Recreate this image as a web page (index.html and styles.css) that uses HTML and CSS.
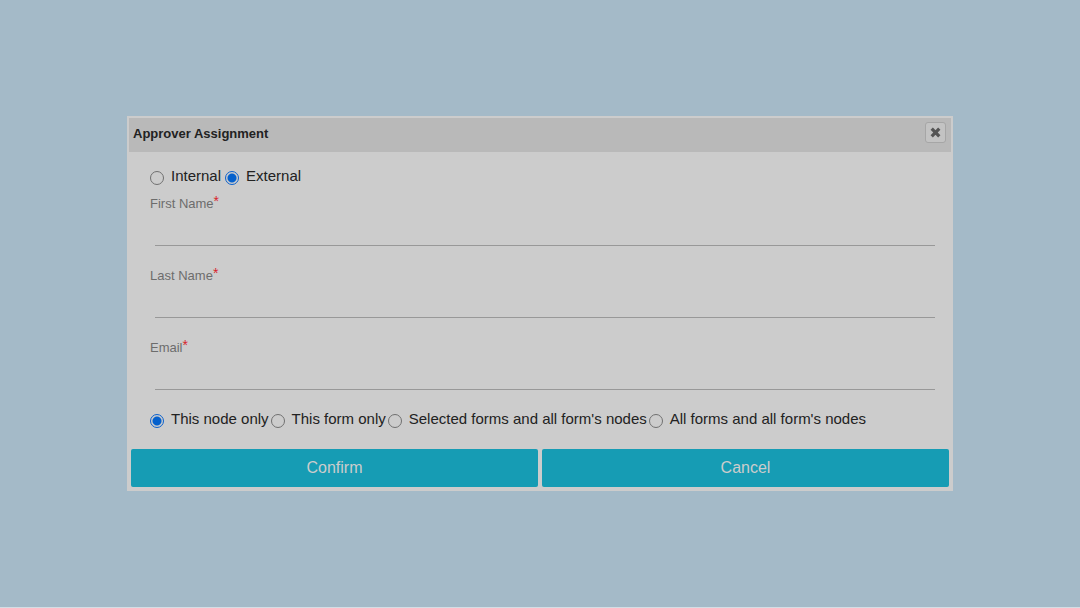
FILE: index.html
```html
<!DOCTYPE html>
<html lang="en">
<head>
<meta charset="utf-8">
<meta name="viewport" content="width=device-width, initial-scale=1">
<title>Approver Assignment</title>
<link rel="stylesheet" href="styles.css">
</head>
<body>
<main class="page">
  <form class="dialog" role="dialog" aria-labelledby="dialog-title">
    <header class="dialog-header">
      <h1 class="dialog-title" id="dialog-title">Approver Assignment</h1>
      <button class="close-button" type="button" aria-label="Close">
        <svg class="close-icon" viewBox="0 0 12 12" aria-hidden="true"><path d="M2.500 2.500L9.500 9.500M9.500 2.500L2.500 9.500"/></svg>
      </button>
    </header>
    <div class="dialog-body">
      <div class="options">
        <label class="option"><input class="radio" type="radio" name="kind">Internal</label>
        <label class="option"><input class="radio" type="radio" name="kind" checked>External</label>
      </div>
      <div class="field">
        <label class="field-label" for="first-name">First Name<span class="required">*</span></label>
        <input class="field-input" id="first-name" type="text">
      </div>
      <div class="field">
        <label class="field-label" for="last-name">Last Name<span class="required">*</span></label>
        <input class="field-input" id="last-name" type="text">
      </div>
      <div class="field">
        <label class="field-label" for="email">Email<span class="required">*</span></label>
        <input class="field-input" id="email" type="email">
      </div>
      <div class="options options-scope">
        <label class="option"><input class="radio" type="radio" name="scope" checked>This node only</label>
        <label class="option"><input class="radio" type="radio" name="scope">This form only</label>
        <label class="option"><input class="radio" type="radio" name="scope">Selected forms and all form's nodes</label>
        <label class="option"><input class="radio" type="radio" name="scope">All forms and all form's nodes</label>
      </div>
    </div>
    <footer class="dialog-actions">
      <button class="action" type="button">Confirm</button>
      <button class="action" type="button">Cancel</button>
    </footer>
  </form>
</main>
</body>
</html>
```

FILE: styles.css
```css
* {
  box-sizing: border-box;
}

body {
  margin: 0;
  background: #a4bac8;
  color: #222;
  font-family: "Liberation Sans", Arial, sans-serif;
  font-size: 15px;
}

.page {
  display: flex;
  align-items: center;
  justify-content: center;
  min-height: 100vh;
  border-bottom: 1px solid #d3dee5;
}

.dialog {
  width: 90%;
  max-width: 826px;
  padding: 2px;
  background: #cccccc;
}

.dialog-header {
  display: flex;
  align-items: flex-start;
  justify-content: space-between;
  min-height: 34px;
  padding: 4px 5px 4px 4px;
  background: #b9b9b9;
}

.dialog-title {
  margin: 0;
  font-size: 13px;
  line-height: 24px;
}

.close-button {
  display: flex;
  align-items: center;
  justify-content: center;
  width: 21px;
  height: 21px;
  padding: 0;
  border: 1px solid #a6a6a6;
  border-radius: 3px;
  background: #c3c3c3;
}

.close-icon {
  width: 13px;
  height: 13px;
  fill: none;
  stroke: #555;
  stroke-width: 3;
}

.dialog-body {
  padding: 14px 16px 20px 21px;
}

.options {
  display: flex;
  flex-wrap: wrap;
  column-gap: 4px;
}

.options-scope {
  column-gap: 2px;
  padding-top: 7px;
}

.option {
  display: flex;
  gap: 7px;
  line-height: 20px;
}

.radio {
  appearance: none;
  width: 14px;
  height: 14px;
  margin: 5px 0 0;
  border: 1px solid #707070;
  border-radius: 50%;
}

.radio:checked {
  border-color: #0b61cc;
  background: radial-gradient(circle, #0460cc 4px, transparent 5px);
}

.field {
  min-height: 72px;
  padding-top: 10px;
}

.field-label {
  display: block;
  color: #6c6c6c;
  font-size: 13px;
  line-height: 16px;
}

.required {
  position: relative;
  top: -2px;
  color: #d8242c;
  font-size: 14px;
  line-height: 1;
}

.field-input {
  display: block;
  width: calc(100% - 5px);
  height: 34px;
  margin-left: 5px;
  padding: 0;
  border: 0;
  border-bottom: 1px solid #989898;
  background: transparent;
  color: inherit;
  font: inherit;
}

.dialog-actions {
  display: grid;
  grid-template-columns: 1fr 1fr;
  gap: 4px;
  padding: 0 2px 2px;
}

.action {
  height: 38px;
  padding: 0;
  border: 0;
  border-radius: 2px;
  background: #169cb4;
  color: #cccccc;
  font: inherit;
  font-size: 16px;
}
```
